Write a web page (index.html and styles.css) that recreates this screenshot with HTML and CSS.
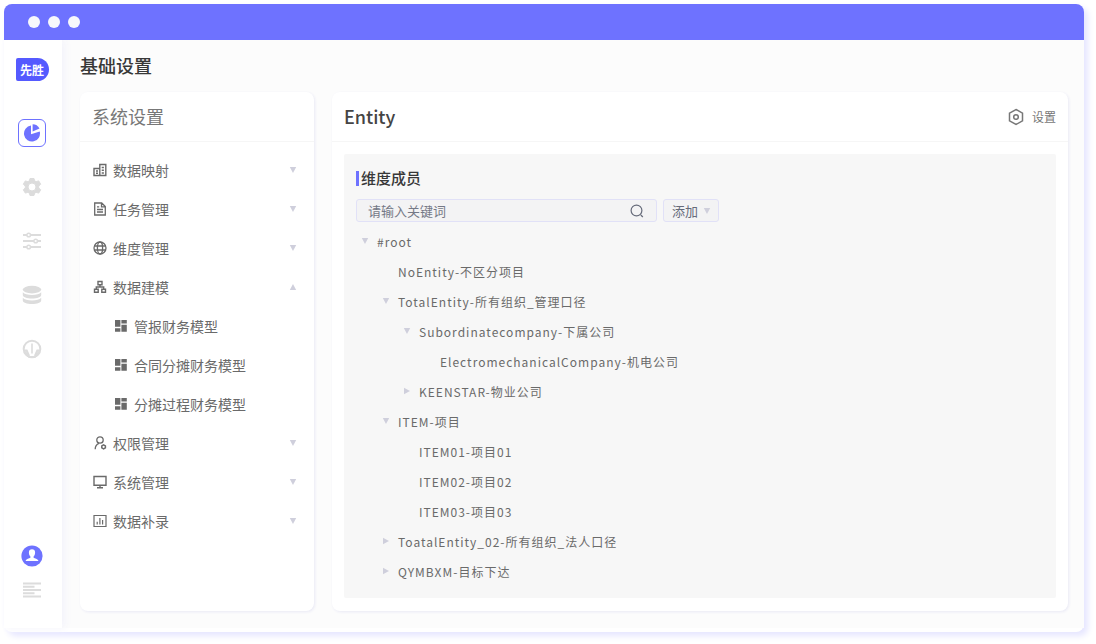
FILE: index.html
```html
<!DOCTYPE html>
<html lang="zh-CN">
<head>
    <meta charset="UTF-8">
    <meta name="viewport" content="width=device-width, initial-scale=1.0">
    <title>基础设置</title>
    <link rel="stylesheet" href="styles.css">
</head>
<body>
    <svg class="sprite" aria-hidden="true">
        <symbol id="caret" viewBox="0 0 8 8"><path d="M0.8 1h6.400L4 7z" fill="currentColor"/></symbol>
        <symbol id="blocks" viewBox="0 0 14 14">
            <path d="M1 1h5.400v6.800H1zM7.400 1h5.400v3.400H7.400zM1 9.200h5.400v3.600H1zM7.400 5.800h5.400v7H7.400z" fill="currentColor"/>
        </symbol>
    </svg>

    <div class="window">
        <div class="title-bar">
            <span class="dot"></span>
            <span class="dot"></span>
            <span class="dot"></span>
        </div>

        <div class="layout">
            <nav class="sidebar">
                <a href="#" class="logo">先胜</a>
                <button type="button" class="nav-btn active" aria-label="报表">
                    <svg width="18" height="18" viewBox="0 0 18 18" fill="currentColor">
                        <path d="M8 1.600A8 8 0 1 0 16.700 7.400L8 10.200z"/>
                        <path d="M9.600 0.200v7.400l6.900-3.200A8 8 0 0 0 9.600 0.200z"/>
                    </svg>
                </button>
                <button type="button" class="nav-btn" aria-label="设置">
                    <svg width="20" height="20" viewBox="0 0 20 20" stroke="currentColor" stroke-width="1" stroke-linejoin="round">
                        <path fill="currentColor" fill-rule="evenodd" d="M8 1.500h4l.6 2.300 1.500.9 2.600-.8 2 3.300-2 1.900v1.800l2 1.900-2 3.300-2.600-.8-1.500.9-.6 2.300H8l-.6-2.300-1.500-.9-2.600.8-2-3.300 2-1.900V9.100l-2-1.900 2-3.300 2.600.8 1.500-.9zM10 6a4 4 0 1 0 0 8 4 4 0 0 0 0-8z"/>
                    </svg>
                </button>
                <button type="button" class="nav-btn" aria-label="参数">
                    <svg width="20" height="18" viewBox="0 0 20 18" fill="#fff" stroke="currentColor" stroke-width="2">
                        <path d="M1 3h18M1 9h18M1 15h18"/>
                        <g stroke-width="1.500">
                            <circle cx="6.700" cy="3" r="1.800"/>
                            <circle cx="13.700" cy="9" r="1.800"/>
                            <circle cx="6.700" cy="15" r="1.800"/>
                        </g>
                    </svg>
                </button>
                <button type="button" class="nav-btn" aria-label="数据">
                    <svg width="20" height="20" viewBox="0 0 20 20" fill="currentColor">
                        <ellipse cx="10" cy="4.600" rx="9.200" ry="3.800"/>
                        <path d="M.8 7.200c1.500 1.900 5 2.700 9.200 2.700s7.700-.8 9.200-2.700v2.900c0 2-4 3.500-9.200 3.500S.8 12.100.8 10.100z"/>
                        <path d="M.8 12.700c1.500 1.900 5 2.700 9.200 2.700s7.700-.8 9.200-2.700v2.900c0 2-4 3.500-9.200 3.500S.8 17.600.8 15.600z"/>
                    </svg>
                </button>
                <button type="button" class="nav-btn" aria-label="监控">
                    <svg width="20" height="20" viewBox="0 0 20 20" fill="none" stroke="currentColor">
                        <circle cx="10" cy="10" r="8.300" stroke-width="2"/>
                        <path d="M2.500 11.500h2.200l2 4.500v1.500M17.500 11.500h-2.200l-2 4.500v1.500" stroke-width="2"/>
                        <path d="M3 12.500l2.500 4 2 1.500h5l2-1.500 2.500-4" stroke-width="2"/>
                        <path d="M10 4.500v10" stroke-width="1.600"/>
                    </svg>
                </button>
                <button type="button" class="nav-btn user" aria-label="用户">
                    <svg width="22" height="22" viewBox="0 0 22 22">
                        <circle cx="11" cy="11" r="10.600" fill="#6e72ff"/>
                        <path fill="#fff" d="M11 4.300c1.900 0 3.100 1.200 3.100 3.200 0 1.900-.7 3.200-1.500 4v1.200c1.300.7 4 1 4.700 2.700v.5H4.700v-.5c.7-1.700 3.400-2 4.700-2.700v-1.200c-.8-.8-1.500-2.100-1.500-4 0-2 1.200-3.200 3.100-3.200z"/>
                    </svg>
                </button>
                <button type="button" class="nav-btn" aria-label="展开菜单">
                    <svg width="18" height="16" viewBox="0 0 18 16" stroke="currentColor" stroke-width="2">
                        <path d="M0 1.500h18M0 4.800h11.500M0 8h18M0 11.200h11.500M0 14.500h18"/>
                    </svg>
                </button>
            </nav>

            <main class="main">
                <h1>基础设置</h1>
                <div class="columns">
                    <section class="card settings">
                        <div class="card-header">
                            <h2>系统设置</h2>
                        </div>
                        <ul class="menu">
                            <li>
                                <button type="button" class="menu-item">
                                    <svg class="icon" viewBox="0 0 14 14" fill="none" stroke="currentColor" stroke-width="1.400">
                                        <path d="M1 5.500h5.800v7H1zM6.800 1.500h6v11h-6zM3 8h2M3 10.200h2M8.700 4.500h2.200M8.700 7.200h2.200M8.700 10h2.200"/>
                                    </svg>
                                    <span>数据映射</span>
                                    <svg class="caret"><use href="#caret"/></svg>
                                </button>
                            </li>
                            <li>
                                <button type="button" class="menu-item">
                                    <svg class="icon" viewBox="0 0 14 14" fill="none" stroke="currentColor" stroke-width="1.300">
                                        <path d="M1.700 1h7l3.600 3.600V13H1.700zM8.500 1v3.800h3.800M4 4.800h2.200M4 7.500h6M4 10h6"/>
                                    </svg>
                                    <span>任务管理</span>
                                    <svg class="caret"><use href="#caret"/></svg>
                                </button>
                            </li>
                            <li>
                                <button type="button" class="menu-item">
                                    <svg class="icon" viewBox="0 0 14 14" fill="none" stroke="currentColor" stroke-width="1.300">
                                        <circle cx="7" cy="7" r="6"/>
                                        <ellipse cx="7" cy="7" rx="2.600" ry="6"/>
                                        <path d="M1.500 5h11M1.500 9h11"/>
                                    </svg>
                                    <span>维度管理</span>
                                    <svg class="caret"><use href="#caret"/></svg>
                                </button>
                            </li>
                            <li>
                                <button type="button" class="menu-item" aria-expanded="true">
                                    <svg class="icon" viewBox="0 0 14 14" fill="none" stroke="currentColor" stroke-width="1.400">
                                        <path d="M5 1.500h4v3.300H5zM1.500 9.200h3.700v3H1.500zM8.800 9.200h3.700v3H8.800zM7 4.800V7M3.300 9.200V7h7.400v2.200"/>
                                    </svg>
                                    <span>数据建模</span>
                                    <svg class="caret"><use href="#caret"/></svg>
                                </button>
                                <ul class="submenu">
                                    <li><a href="#" class="menu-item"><svg class="icon"><use href="#blocks"/></svg><span>管报财务模型</span></a></li>
                                    <li><a href="#" class="menu-item"><svg class="icon"><use href="#blocks"/></svg><span>合同分摊财务模型</span></a></li>
                                    <li><a href="#" class="menu-item"><svg class="icon"><use href="#blocks"/></svg><span>分摊过程财务模型</span></a></li>
                                </ul>
                            </li>
                            <li>
                                <button type="button" class="menu-item">
                                    <svg class="icon" viewBox="0 0 14 14" fill="none" stroke="currentColor" stroke-width="1.300">
                                        <circle cx="7" cy="4" r="3.200"/>
                                        <path d="M2.200 13.200c0-3 1.300-4.800 3.800-5.800"/>
                                        <path d="M10.600 8.900l1.800 1v2l-1.800 1-1.800-1v-2z" stroke-width="1.500"/>
                                    </svg>
                                    <span>权限管理</span>
                                    <svg class="caret"><use href="#caret"/></svg>
                                </button>
                            </li>
                            <li>
                                <button type="button" class="menu-item">
                                    <svg class="icon" viewBox="0 0 14 14" fill="none" stroke="currentColor" stroke-width="1.400">
                                        <path d="M1 1.500h12v8.800H1zM7 10.300v2.300M4 12.700h6"/>
                                    </svg>
                                    <span>系统管理</span>
                                    <svg class="caret"><use href="#caret"/></svg>
                                </button>
                            </li>
                            <li>
                                <button type="button" class="menu-item">
                                    <svg class="icon" viewBox="0 0 14 14" fill="none" stroke="currentColor" stroke-width="1.200">
                                        <path d="M1 1.500h12v11H1zM4.200 7.800v2.700M6.900 4v6.500M9.600 6v4.500"/>
                                    </svg>
                                    <span>数据补录</span>
                                    <svg class="caret"><use href="#caret"/></svg>
                                </button>
                            </li>
                        </ul>
                    </section>

                    <section class="card entity">
                        <div class="card-header">
                            <h2>Entity</h2>
                            <button type="button" class="config-btn">
                                <svg width="16" height="18" viewBox="0 0 16 18" fill="none" stroke="currentColor" stroke-width="1.500">
                                    <path d="M8 1.500l6.500 3.700v7.600L8 16.500l-6.500-3.700V5.200z"/>
                                    <circle cx="8" cy="9" r="2.300"/>
                                </svg>
                                <span>设置</span>
                            </button>
                        </div>
                        <div class="panel">
                            <h3>维度成员</h3>
                            <form class="toolbar">
                                <label class="search">
                                    <input type="text" placeholder="请输入关键词" aria-label="关键词">
                                    <svg width="14" height="14" viewBox="0 0 14 14" fill="none" stroke="currentColor" stroke-width="1.200">
                                        <circle cx="6.500" cy="6.500" r="5.400"/>
                                        <path d="M10.800 11l2 2"/>
                                    </svg>
                                </label>
                                <button type="button" class="add-btn">添加<svg class="caret"><use href="#caret"/></svg></button>
                            </form>
                            <ul class="tree">
                                <li>
                                    <div class="node"><svg class="caret"><use href="#caret"/></svg>#root</div>
                                    <ul>
                                        <li><div class="node leaf">NoEntity-不区分项目</div></li>
                                        <li>
                                            <div class="node"><svg class="caret"><use href="#caret"/></svg>TotalEntity-所有组织_管理口径</div>
                                            <ul>
                                                <li>
                                                    <div class="node"><svg class="caret"><use href="#caret"/></svg>Subordinatecompany-下属公司</div>
                                                    <ul>
                                                        <li><div class="node leaf">ElectromechanicalCompany-机电公司</div></li>
                                                    </ul>
                                                </li>
                                                <li><div class="node closed"><svg class="caret"><use href="#caret"/></svg>KEENSTAR-物业公司</div></li>
                                            </ul>
                                        </li>
                                        <li>
                                            <div class="node"><svg class="caret"><use href="#caret"/></svg>ITEM-项目</div>
                                            <ul>
                                                <li><div class="node leaf">ITEM01-项目01</div></li>
                                                <li><div class="node leaf">ITEM02-项目02</div></li>
                                                <li><div class="node leaf">ITEM03-项目03</div></li>
                                            </ul>
                                        </li>
                                        <li><div class="node closed"><svg class="caret"><use href="#caret"/></svg>ToatalEntity_02-所有组织_法人口径</div></li>
                                        <li><div class="node closed"><svg class="caret"><use href="#caret"/></svg>QYMBXM-目标下达</div></li>
                                    </ul>
                                </li>
                            </ul>
                        </div>
                    </section>
                </div>
            </main>
        </div>
    </div>
</body>
</html>
```
FILE: styles.css
```css
* {
    margin: 0;
    padding: 0;
    box-sizing: border-box;
}

body {
    font-family: 'Noto Sans CJK SC', 'Noto Sans', sans-serif;
    background-color: #fff;
    color: #6a6a6a;
}

button, input {
    font: inherit;
    color: inherit;
    background: none;
    border: none;
}

button {
    cursor: pointer;
}

ul {
    list-style: none;
}

a {
    color: inherit;
    text-decoration: none;
}

.sprite {
    display: none;
}

/* Window frame */
.window {
    display: flex;
    flex-direction: column;
    min-height: calc(100vh - 16px);
    margin: 4px 12px 12px 4px;
    padding-bottom: 4px;
    background-color: #fff;
    border-radius: 8px;
    box-shadow: 4px 4px 6px #e6e6ff;
}

.title-bar {
    position: relative;
    z-index: 2;
    display: flex;
    align-items: center;
    gap: 8px;
    height: 36px;
    padding-left: 24px;
    background-color: #6e72ff;
    border-radius: 8px 8px 0 0;
}

.dot {
    width: 12px;
    height: 12px;
    border-radius: 50%;
    background-color: #f7f8fc;
}

.layout {
    display: flex;
    flex: 1;
}

/* Sidebar */
.sidebar {
    display: flex;
    flex-direction: column;
    align-items: center;
    width: 58px;
    padding: 18px 2px 24px 0;
    background-color: #fff;
    box-shadow: 3px 0 8px #f3f3fb;
    z-index: 1;
}

.logo {
    width: 33px;
    margin-bottom: 12px;
    font-size: 12px;
    font-weight: 700;
    line-height: 23px;
    text-align: center;
    color: #fff;
    background-color: #555aff;
    border-radius: 2px 12px 12px 2px;
}

.nav-btn {
    display: flex;
    align-items: center;
    justify-content: center;
    width: 28px;
    height: 28px;
    margin-top: 26px;
    color: #dcdcdc;
}

.nav-btn.active {
    color: #6e72ff;
    border: 1px solid #6e72ff;
    border-radius: 6px;
}

.nav-btn.user {
    margin-top: auto;
}

.nav-btn.user + .nav-btn {
    margin-top: 6px;
}

/* Content */
.main {
    display: flex;
    flex-direction: column;
    flex: 1;
    padding: 12px 16px 17px 18px;
    background-color: #fcfcfc;
}

h1 {
    margin-bottom: 13px;
    font-size: 18px;
    font-weight: 500;
    line-height: 27px;
    color: #383838;
}

.columns {
    display: flex;
    flex: 1;
    gap: 18px;
}

.card {
    background-color: #fff;
    border-radius: 8px;
    box-shadow: 1px 1px 3px #e9e9f5;
}

.settings {
    width: 234px;
}

.entity {
    flex: 1;
}

.card-header {
    display: flex;
    align-items: center;
    justify-content: space-between;
    height: 50px;
    padding: 0 12px;
    border-bottom: 1px solid #f6f6f6;
}

.card-header h2 {
    font-size: 18px;
    font-weight: 400;
    line-height: 27px;
    color: #777;
}

.entity .card-header h2 {
    font-weight: 500;
    color: #444;
}

.config-btn {
    display: flex;
    align-items: center;
    gap: 8px;
    font-size: 12px;
    color: #777;
}

/* Settings menu */
.menu {
    padding-top: 8px;
}

.menu-item {
    display: flex;
    align-items: center;
    gap: 6px;
    width: 100%;
    height: 39px;
    padding: 0 17px 0 13px;
    font-size: 14px;
    text-align: left;
}

.submenu .menu-item {
    padding-left: 34px;
}

.menu-item span {
    flex: 1;
}

.icon {
    width: 14px;
    height: 14px;
}

.caret {
    flex: none;
    width: 8px;
    height: 8px;
    color: #cfcfdc;
}

.menu-item[aria-expanded="true"] .caret {
    transform: rotate(180deg);
}

/* Member panel */
.panel {
    margin: 12px;
    padding: 12px;
    background-color: #f7f7f7;
    border-radius: 2px;
}

h3 {
    display: flex;
    align-items: center;
    gap: 2px;
    font-size: 15px;
    font-weight: 500;
    line-height: 24px;
    color: #383838;
}

h3::before {
    content: "";
    width: 3px;
    height: 15px;
    background-color: #6e72ff;
}

.toolbar {
    display: flex;
    gap: 6px;
    margin: 9px 0 4px;
    font-size: 13px;
    color: #666b7a;
}

.search,
.add-btn {
    display: flex;
    align-items: center;
    height: 23px;
    background-color: #f3f3f4;
    border: 1px solid #e1e1f7;
    border-radius: 3px;
}

.search {
    width: 301px;
    padding: 0 12px 0 11px;
}

.search input {
    flex: 1;
    min-width: 0;
    height: 21px;
    outline: none;
}

.search input::placeholder {
    color: #757986;
}

.add-btn {
    gap: 5px;
    padding: 0 7px 0 8px;
}

.tree {
    padding-left: 5px;
    font-size: 12px;
    letter-spacing: 1px;
}

.tree ul {
    padding-left: 21px;
}

.node {
    display: flex;
    align-items: center;
    gap: 8px;
    height: 30px;
}

.node.leaf {
    padding-left: 16px;
}

.node.closed .caret {
    transform: rotate(-90deg);
}
```
